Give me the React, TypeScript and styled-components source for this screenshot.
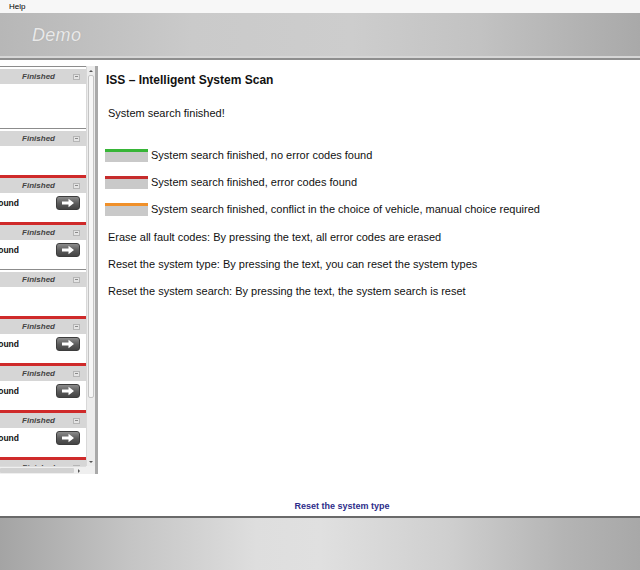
import React from "react";
import styled, { createGlobalStyle } from "styled-components";

const GlobalStyle = createGlobalStyle`
  html, body {
    margin: 0;
    padding: 0;
    background: #ffffff;
  }
  body {
    font-family: "Liberation Sans", Arial, sans-serif;
  }
`;

const Shell = styled.div`
  width: 640px;
  height: 570px;
  display: flex;
  flex-direction: column;
  overflow: hidden;
`;

const MenuBar = styled.div`
  height: 13px;
  line-height: 13px;
  padding-left: 9px;
  font-size: 8px;
  color: #000;
  background: #f7f7f7;
`;

const Header = styled.div`
  height: 47px;
  box-sizing: border-box;
  display: flex;
  align-items: center;
  padding-left: 32px;
  background: linear-gradient(90deg, #b7b7b7 0%, #cacaca 30%, #cdcdcd 55%, #c2c2c2 75%, #a9a9a9 100%);
  border-bottom: 2px solid #8e8e8e;
  box-shadow: inset 0 -2px 0 #d6d6d6;
`;

const Logo = styled.span`
  font-size: 18px;
  font-style: italic;
  color: #e9e9e9;
  letter-spacing: 0.3px;
  text-shadow: 0 0 1px rgba(150, 150, 150, 0.6);
  margin-bottom: 1px;
`;

const Main = styled.div`
  flex: 1;
  display: flex;
  flex-direction: column;
  background: #ffffff;
`;

const Body = styled.div`
  flex: 1;
  display: flex;
  align-items: flex-start;
`;

const LeftPane = styled.div`
  margin-top: 6px;
  width: 98px;
  height: 408px;
  box-sizing: border-box;
  display: grid;
  grid-template-columns: 86px 9px;
  grid-template-rows: 1fr 8px;
  border-right: 3px solid #a9a9a9;
`;

const CardList = styled.div`
  overflow: hidden;
  display: flex;
  flex-direction: column;
`;

const Card = styled.div<{ $error?: boolean }>`
  flex: 0 0 auto;
  border-top: ${({ $error }) => ($error ? "3px solid #cf2a2a" : "1px solid #8c8c8c")};
  padding-top: ${({ $error }) => ($error ? 0 : 2)}px;
`;

const CardHeader = styled.div`
  height: 15px;
  display: flex;
  align-items: center;
  justify-content: flex-end;
  gap: 18px;
  padding-right: 6px;
  background: #d6d6d6;
`;

const Status = styled.span`
  font-size: 8px;
  font-weight: bold;
  font-style: italic;
  color: #444444;
`;

const MinusBox = styled.span`
  width: 7px;
  height: 6px;
  box-sizing: border-box;
  border: 1px solid #b5b5b5;
  background: #e4e4e4;
  display: flex;
  align-items: center;
  justify-content: center;
  &::after {
    content: "";
    width: 3px;
    height: 1px;
    background: #8a8a8a;
  }
`;

const CardBody = styled.div<{ $tall?: boolean }>`
  height: ${({ $tall }) => ($tall ? 44 : 29)}px;
  box-sizing: border-box;
  display: flex;
  align-items: flex-start;
  justify-content: space-between;
  padding: 3px 6px 0 0;
  background: #ffffff;
`;

const FoundLabel = styled.span`
  width: 19px;
  overflow: hidden;
  white-space: nowrap;
  direction: rtl;
  font-size: 8.5px;
  font-weight: bold;
  color: #111;
  line-height: 14px;
`;

const ArrowButton = styled.button`
  width: 24px;
  height: 14px;
  padding: 0;
  box-sizing: border-box;
  border: 1px solid #3d3d3d;
  border-radius: 3px;
  background: linear-gradient(#8c8c8c, #5a5a5a 55%, #444444);
  display: flex;
  align-items: center;
  justify-content: center;
`;

const VScroll = styled.div`
  display: flex;
  flex-direction: column;
  background: #ececec;
  border-left: 1px solid #d8d8d8;
`;

const ScrollArrow = styled.div<{ $dir: "up" | "down" }>`
  height: 9px;
  display: flex;
  align-items: center;
  justify-content: center;
  &::after {
    content: "";
    border-left: 2px solid transparent;
    border-right: 2px solid transparent;
    ${({ $dir }) => ($dir === "up" ? "border-bottom: 2px solid #555;" : "border-top: 2px solid #555;")}
  }
`;

const Track = styled.div`
  flex: 1;
`;

const Thumb = styled.div`
  height: 323px;
  margin: 0 1px;
  box-sizing: border-box;
  background: #f6f6f6;
  border: 1px solid #c4c4c4;
  border-radius: 2px;
`;

const HScroll = styled.div`
  display: flex;
  align-items: center;
  background: #efefef;
  border-top: 1px solid #dcdcdc;
`;

const HThumb = styled.div`
  width: 74px;
  height: 5px;
  background: #d2d2d2;
  border-radius: 1px;
`;

const HArrow = styled.div`
  margin-left: 4px;
  width: 0;
  height: 0;
  border-top: 2px solid transparent;
  border-bottom: 2px solid transparent;
  border-left: 2px solid #555;
`;

const Corner = styled.div`
  background: #efefef;
`;

const Content = styled.div`
  flex: 1;
  padding: 13px 0 0 7px;
  color: #111;
`;

const Title = styled.h1`
  margin: 0 0 0 1px;
  font-size: 12px;
  line-height: 14px;
  font-weight: bold;
`;

const Text = styled.p<{ $top: number }>`
  margin: ${({ $top }) => $top}px 0 0 3px;
  font-size: 11px;
  line-height: 13px;
`;

const Legend = styled.div`
  margin-top: 29px;
  display: flex;
  flex-direction: column;
  gap: 14px;
`;

const LegendRow = styled.div`
  display: flex;
  align-items: center;
  gap: 3px;
  font-size: 11px;
  line-height: 13px;
`;

const Swatch = styled.span<{ $color: string }>`
  width: 43px;
  height: 13px;
  box-sizing: border-box;
  background: #c9c9c9;
  border-top: 3px solid ${({ $color }) => $color};
`;

const LinkRow = styled.div`
  height: 20px;
  display: flex;
  align-items: center;
  justify-content: center;
  padding-left: 44px;
`;

const ResetLink = styled.a`
  font-size: 9px;
  font-weight: bold;
  color: #2d2d8a;
  text-decoration: none;
  cursor: pointer;
`;

const Footer = styled.div`
  height: 54px;
  box-sizing: border-box;
  border-top: 2px solid #6a6a6a;
  background: linear-gradient(90deg, #a4a4a4 0%, #c4c4c4 20%, #dedede 40%, #e0e0e0 50%, #cfcfcf 70%, #b4b4b4 88%, #a8a8a8 100%);
`;

type CardData = { error?: boolean; tall?: boolean };

const cards: CardData[] = [
  { tall: true },
  {},
  { error: true },
  { error: true },
  {},
  { error: true },
  { error: true },
  { error: true },
  { error: true },
];

const ArrowIcon = () => (
  <svg width="14" height="10" viewBox="0 0 14 10">
    <path d="M1 3.5h6.5V0.8L13 5l-5.5 4.2V6.5H1z" fill="#ffffff" />
  </svg>
);

const ScanCard = ({ error, tall }: CardData) => (
  <Card $error={error}>
    <CardHeader>
      <Status>Finished</Status>
      <MinusBox />
    </CardHeader>
    <CardBody $tall={tall}>
      {error && (
        <>
          <FoundLabel>Error codes found</FoundLabel>
          <ArrowButton>
            <ArrowIcon />
          </ArrowButton>
        </>
      )}
    </CardBody>
  </Card>
);

const legend = [
  { color: "#37b537", text: "System search finished, no error codes found" },
  { color: "#c62c2c", text: "System search finished, error codes found" },
  { color: "#f0902a", text: "System search finished, conflict in the choice of vehicle, manual choice required" },
];

export default function App() {
  return (
    <Shell>
      <GlobalStyle />
      <MenuBar>Help</MenuBar>
      <Header>
        <Logo>Demo</Logo>
      </Header>
      <Main>
        <Body>
          <LeftPane>
            <CardList>
              {cards.map((c, i) => (
                <ScanCard key={i} {...c} />
              ))}
            </CardList>
            <VScroll>
              <ScrollArrow $dir="up" />
              <Track>
                <Thumb />
              </Track>
              <ScrollArrow $dir="down" />
            </VScroll>
            <HScroll>
              <HThumb />
              <HArrow />
            </HScroll>
            <Corner />
          </LeftPane>
          <Content>
            <Title>ISS – Intelligent System Scan</Title>
            <Text $top={20}>System search finished!</Text>
            <Legend>
              {legend.map((l) => (
                <LegendRow key={l.color}>
                  <Swatch $color={l.color} />
                  <span>{l.text}</span>
                </LegendRow>
              ))}
            </Legend>
            <Text $top={15}>Erase all fault codes: By pressing the text, all error codes are erased</Text>
            <Text $top={14}>Reset the system type: By pressing the text, you can reset the system types</Text>
            <Text $top={14}>Reset the system search: By pressing the text, the system search is reset</Text>
          </Content>
        </Body>
        <LinkRow>
          <ResetLink>Reset the system type</ResetLink>
        </LinkRow>
      </Main>
      <Footer />
    </Shell>
  );
}
